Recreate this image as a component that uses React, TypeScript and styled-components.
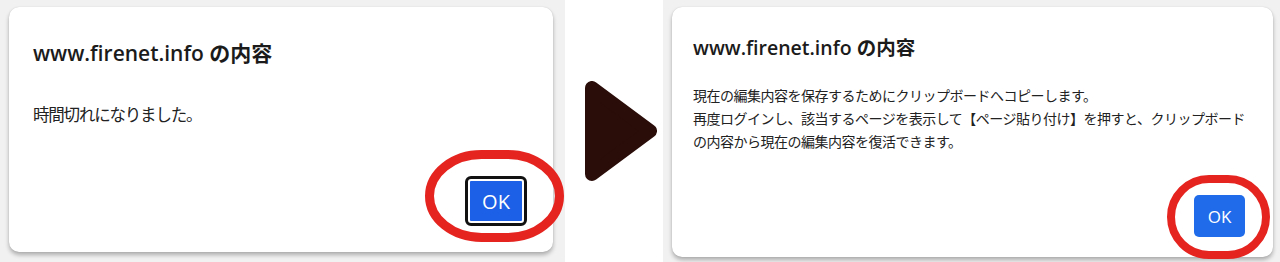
import React from "react";
import styled, { createGlobalStyle } from "styled-components";

const Global = createGlobalStyle`
  html, body { margin: 0; padding: 0; background: #ffffff; }
  body { width: 1280px; height: 262px; overflow: hidden; }
  * { box-sizing: border-box; }
`;

const Page = styled.div`
  display: flex;
  width: 1280px;
  height: 262px;
  background: #ffffff;
`;

const Shot = styled.div<{ $w?: number; $pad: string }>`
  display: flex;
  ${(p) => (p.$w ? `width: ${p.$w}px; flex: none;` : "flex: 1;")}
  height: 262px;
  padding: ${(p) => p.$pad};
  background: #f1f1f1;
`;

const Card = styled.div<{ $h: number; $pad: string }>`
  display: flex;
  flex-direction: column;
  flex: 1;
  height: ${(p) => p.$h}px;
  padding: ${(p) => p.$pad};
  background: #ffffff;
  border-radius: 10px;
  box-shadow: 0 0 1px rgba(0, 0, 0, 0.18), 0 3px 4px rgba(0, 0, 0, 0.28);
`;

const Title = styled.div<{ $size: number; $lh: number }>`
  font-family: "Open Sans", "Noto Sans CJK JP", sans-serif;
  font-weight: 600;
  font-size: ${(p) => p.$size}px;
  line-height: ${(p) => p.$lh}px;
  color: #1b1b1b;
  white-space: nowrap;
`;

const Body = styled.div<{ $size: number; $lh: number; $ls: number; $mt: number }>`
  margin-top: ${(p) => p.$mt}px;
  font-family: "Noto Sans CJK JP", sans-serif;
  font-size: ${(p) => p.$size}px;
  line-height: ${(p) => p.$lh}px;
  letter-spacing: ${(p) => p.$ls}px;
  color: #222222;
  white-space: nowrap;
`;

const Footer = styled.div`
  margin-top: auto;
  display: flex;
  justify-content: flex-end;
`;

const ButtonWrap = styled.div`
  position: relative;
  display: flex;
`;

const OkButton = styled.button<{ $w: number; $h: number; $focus?: boolean }>`
  width: ${(p) => p.$w}px;
  height: ${(p) => p.$h}px;
  display: flex;
  align-items: center;
  justify-content: center;
  padding: 0;
  font-family: "Open Sans", sans-serif;
  font-size: ${(p) => (p.$focus ? 20 : 17)}px;
  color: #ffffff;
  background: ${(p) => (p.$focus ? "#1b60e6" : "#1f6bea")};
  border: ${(p) => (p.$focus ? "2px solid #ffffff" : "none")};
  border-radius: ${(p) => (p.$focus ? 3 : 5)}px;
  outline: ${(p) => (p.$focus ? "3px solid #111111" : "none")};
`;

const Ring = styled.svg<{ $l: number; $t: number }>`
  position: absolute;
  left: ${(p) => p.$l}px;
  top: ${(p) => p.$t}px;
  pointer-events: none;
  overflow: visible;
`;

const ArrowCell = styled.div`
  display: flex;
  align-items: center;
  width: 98px;
  flex: none;
  padding-left: 20px;
  background: #ffffff;
`;

function RedRing({ l, t, w, h, sw }: { l: number; t: number; w: number; h: number; sw: number }) {
  return (
    <Ring $l={l} $t={t} width={w} height={h} viewBox={`0 0 ${w} ${h}`}>
      <rect
        x={sw / 2}
        y={sw / 2}
        width={w - sw}
        height={h - sw}
        rx={(w - sw) * 0.4}
        ry={(h - sw) * 0.5}
        fill="none"
        stroke="#e52420"
        strokeWidth={sw}
      />
    </Ring>
  );
}

export default function App() {
  return (
    <>
      <Global />
      <Page>
        <Shot $w={565} $pad="7px 12px 10px 9px">
          <Card $h={245} $pad="31px 29px 29px 24px">
            <Title $size={21} $lh={30}>www.firenet.info の内容</Title>
            <Body $size={16.5} $lh={24} $ls={-1.2} $mt={34}>
              時間切れになりました。
            </Body>
            <Footer>
              <ButtonWrap>
                <OkButton $w={56} $h={44} $focus>OK</OkButton>
                <RedRing l={-43} t={-29} w={139} h={92} sw={9} />
              </ButtonWrap>
            </Footer>
          </Card>
        </Shot>
        <ArrowCell>
          <svg width="72" height="100" viewBox="0 0 72 100">
            <polygon
              points="7,7 7,93 65,50"
              fill="#2a0d09"
              stroke="#2a0d09"
              strokeWidth="14"
              strokeLinejoin="round"
            />
          </svg>
        </ArrowCell>
        <Shot $pad="7px 7px 5px 9px">
          <Card $h={250} $pad="27px 28px 20px 21px">
            <Title $size={19.5} $lh={28}>www.firenet.info の内容</Title>
            <Body $size={14} $lh={23} $ls={-0.5} $mt={22}>
              現在の編集内容を保存するためにクリップボードへコピーします。
              <br />
              再度ログインし、該当するページを表示して【ページ貼り付け】を押すと、クリップボード
              <br />
              の内容から現在の編集内容を復活できます。
            </Body>
            <Footer>
              <ButtonWrap>
                <OkButton $w={51} $h={42}>OK</OkButton>
                <RedRing l={-27} t={-20} w={103} h={84} sw={8} />
              </ButtonWrap>
            </Footer>
          </Card>
        </Shot>
      </Page>
    </>
  );
}
